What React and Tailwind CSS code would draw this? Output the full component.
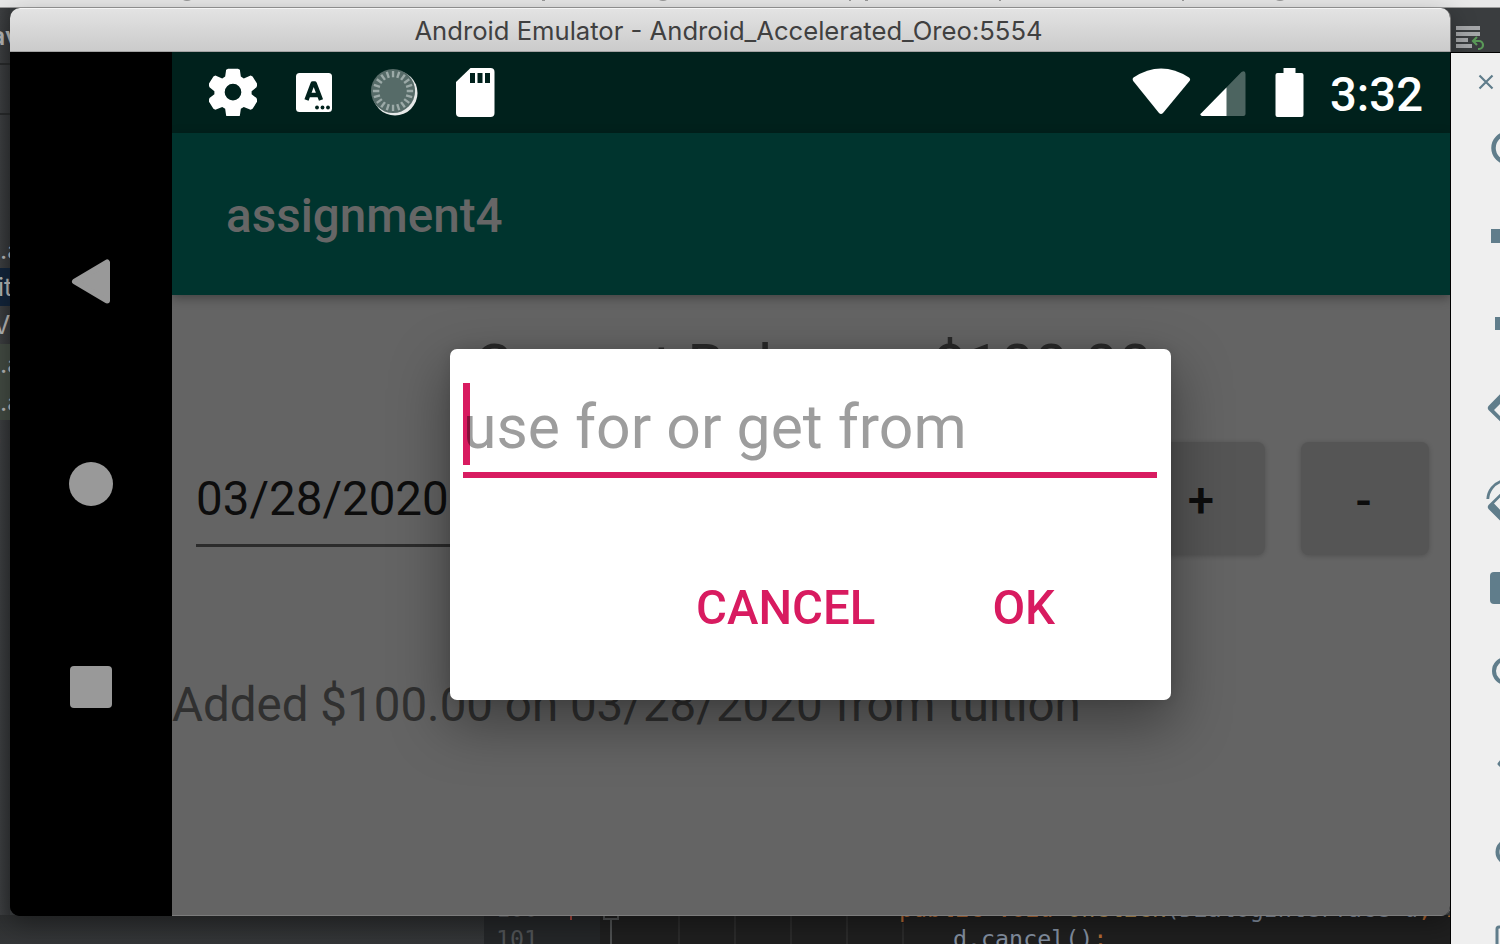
import React from "react";

function Desktop() {
  return (
    <div className="absolute inset-0 flex flex-col bg-[#343638]">
      <div className="h-2 shrink-0 border-b border-[#9b9b9b] bg-[#e8e8e8]">
        <svg className="h-[7px] w-[1500px]" viewBox="0 0 1500 7" fill="#999">
          <path d="M183 0h8q-4 2-8 0zM542 0h3v1h-3zM659 0h8q-4 2-8 0zM849 0h2v1h-2zM865 0h3v1h-3zM999 0h2v1h-2zM1182 0h2v1h-2zM1276 0h8q-4 2-8 0z" />
        </svg>
      </div>
      <div className="flex h-[907px] shrink-0">
        <div className="flex w-[10px] shrink-0 flex-col overflow-hidden whitespace-nowrap bg-linear-to-r from-[#3c3e40] to-[#333537] font-['Inter',sans-serif] text-[25px] leading-[34px] text-[#b4b4b4]">
          <div className="h-[57px] border-b-2 border-[#27292a] pt-[11px]"><div className="-ml-[9px] font-semibold">av</div></div>
          <div className="h-[50px] border-b-2 border-[#27292a]" />
          <div className="h-[115px]" />
          <div className="h-[38px] pt-[3px]">.a</div>
          <div className="h-[38px] bg-[#12243a] pt-0.5"><div className="-ml-0.5">it</div></div>
          <div className="h-[38px] pt-0.5"><div className="-ml-[7px]">V</div></div>
          <div className="h-[38px] bg-[#424a42] pt-[3px]">.a</div>
          <div className="h-[38px] bg-[#424a42] pt-[3px]">.a</div>
          <div className="h-[38px] pt-0.5"><div className="-ml-[7px]">)</div></div>
        </div>
        <div className="flex flex-1 justify-end bg-[#3a3d3f]">
          <svg className="mt-[18px] mr-[15px] h-[26px] w-[30px]" viewBox="0 0 30 26" fill="none">
            <path d="M1 2h24M1 8h24M1 14h12M1 20h16" stroke="#a5a7a9" strokeWidth="4" />
            <path d="M19 15h5a4 4 0 0 1 0 8h-1M22 11l-4 4 4 4" stroke="#5a9a58" strokeWidth="2.2" />
          </svg>
        </div>
      </div>
      <div className="flex h-[29px] overflow-hidden font-['DejaVu_Sans_Mono',monospace] text-[23.3px] leading-[30px]">
        <div className="w-[484px] shrink-0 bg-linear-to-b from-[#2d2f30] to-[#343638]" />
        <div className="relative w-[116px] shrink-0 overflow-hidden bg-[#242628] pl-3 text-[#505356]">
          <div className="-mt-[21px]">100</div>
          <div>101</div>
          <div className="absolute left-[86px] top-0 h-[5px] w-0.5 bg-[#a5453c]" />
        </div>
        <div className="relative flex-1 overflow-hidden whitespace-pre bg-[#1f1f1f] text-[#838fa0]">
          <svg className="absolute left-0 top-0 h-[29px] w-[320px]" viewBox="0 0 320 29" fill="none">
            <path d="M79 0v29M135 0v29M191 0v29M247 0v29M303 8v21" stroke="#2b2b2b" strokeWidth="2" />
            <path d="M4 0v4h14V0M11 5v24" stroke="#4e5051" strokeWidth="2" />
          </svg>
          <div className="-mt-[21px] pl-[299px]"><span className="text-[#b36a34]">public void </span><span className="text-[#b8904f]">onClick</span>(DialogInterface d<span className="text-[#b36a34]">, int</span></div>
          <div className="pl-[353px]">d.cancel()<span className="text-[#b36a34]">;</span></div>
        </div>
      </div>
    </div>
  );
}

function StatusBar() {
  const ticks = Array.from({ length: 20 }, (_, i) => i * 18);
  return (
    <div className="flex h-[81px] shrink-0 items-start bg-[#00211c]">
      <svg className="mt-4 ml-[37px] h-12 w-12" viewBox="0.5 0.3 49 49" fill="white" fillRule="evenodd">
        <path d="M20 1h10l2 1 1 7 3 2 7-3 2 1 5 8-1 3-5 4v3l5 4 1 3-5 8-2 1-7-3-3 2-1 7-2 1H20l-2-1-1-7-3-2-7 3-2-1-5-8 1-3 5-4v-3l-5-4-1-3 5-8 2-1 7 3 3-2 1-7zM25 16.500a8.500 8.500 0 1 0 0 17a8.500 8.500 0 1 0 0-17z" />
      </svg>
      <svg className="mt-[21px] ml-[38px] h-10 w-[37px]" viewBox="0 0 37 40">
        <rect x="1" y="0" width="36" height="39" rx="3.500" fill="white" />
        <path d="M11.500 27L17.700 10.500h2L26 27M14 22h9.500" fill="none" stroke="#00211c" strokeWidth="4.400" strokeLinejoin="round" />
        <g fill="#00211c"><circle cx="22" cy="34.500" r="1.900" /><circle cx="27.500" cy="34.500" r="1.900" /><circle cx="33" cy="34.500" r="1.900" /></g>
      </svg>
      <svg className="mt-4 ml-[38px] h-[49px] w-[49px]" viewBox="0 0 50 50">
        <circle cx="25.500" cy="25.500" r="23" fill="#fff" opacity=".9" />
        <circle cx="23.500" cy="23.500" r="22.500" fill="#566b68" />
        {ticks.map((a) => (
          <path key={a} d="M23.500 3v6.500" stroke="#9caaa8" strokeWidth="2.400" transform={`rotate(${a} 23.5 23.5)`} />
        ))}
      </svg>
      <svg className="mt-4 ml-[36px] h-[49px] w-10" viewBox="0 0 40 49">
        <path d="M15.500 0H35.500a4 4 0 0 1 4 4V45a4 4 0 0 1-4 4H5a4 4 0 0 1-4-4V14z" fill="white" />
        <path d="M15 5h5v10h-5zM22.500 5h5v10h-5zM30 5h5v10h-5z" fill="#00211c" />
      </svg>
      <svg className="mt-[15px] ml-auto h-12 w-[60px]" viewBox="0 0 60 48">
        <path d="M2.500 10.500Q30-7.500 58 10.500Q60 12 58.500 14L32 46Q30 48 28 46L2.200 14Q1 12 2.500 10.500z" fill="white" />
      </svg>
      <svg className="mt-[18px] ml-[9px] h-[47px] w-[46px]" viewBox="0 0 46 47">
        <path d="M1.500 43L41.500 2Q45.500 0 45.500 4V44Q45.500 46 43.500 46H2Q-1 45 1.500 43z" fill="#4c6460" />
        <path d="M1.500 43L26.500 17.500V46H2Q-1 45 1.500 43z" fill="white" />
      </svg>
      <svg className="mt-[15px] ml-[29px] h-[51px] w-[30px]" viewBox="0 0 30 51">
        <path d="M8.500 1H20.500V6H26.500a2 2 0 0 1 2 2V48a2 2 0 0 1-2 2H2.500a2 2 0 0 1-2-2V8a2 2 0 0 1 2-2H8.500z" fill="white" />
      </svg>
      <div className="mt-[19px] ml-[25px] w-[120px] whitespace-nowrap text-[47.250px] leading-[48px] font-medium text-white">3:32</div>
    </div>
  );
}

function Dialog() {
  return (
    <div className="absolute left-[440px] top-[341px] z-20 flex h-[351px] w-[721px] flex-col rounded-[7px] bg-white pr-[14px] pl-[13px] pt-[34px] shadow-[0_22px_55px_4px_rgba(0,0,0,0.36),0_0_16px_rgba(0,0,0,0.12)]">
      <div className="relative h-[89px] whitespace-nowrap text-[60.700px] leading-[89px] text-[#9d9d9d]">
        use for or get from
        <div className="absolute left-0 top-0 h-[82px] w-[7px] bg-[#d81b60] mix-blend-multiply" />
      </div>
      <div className="h-1.5 bg-[#d81b60]" />
      <div className="mt-[92px] flex justify-end gap-[117px] pr-[102px] text-[47.400px] leading-[76px] font-medium text-[#d81b60]">
        <button>CANCEL</button>
        <button>OK</button>
      </div>
    </div>
  );
}

function Emulator() {
  return (
    <div className="absolute left-[10px] top-2 flex h-[908px] w-[1441px] flex-col overflow-hidden rounded-t-[10px] rounded-b-[10px] border-r border-[#777] bg-black shadow-[0_8px_26px_rgba(0,0,0,0.35)]">
      <div className="flex h-11 shrink-0 items-center justify-center border-b border-t border-t-[#f5f5f5] border-b-[#a3a3a3] bg-linear-to-b from-[#e3e3e3] to-[#cbcbcb] pt-0.5 pr-[3px] font-['Inter',sans-serif] text-[25.640px] text-[#404040]">
        <span className="whitespace-nowrap">Android Emulator - Android_Accelerated_Oreo:5554</span>
      </div>
      <div className="flex flex-1">
        <div className="flex w-[162px] shrink-0 flex-col items-center bg-black">
          <svg className="mt-[207px] ml-0.5 h-[46px] w-[42px]" viewBox="0 0.5 42 46">
            <path d="M4 23L36 4V42z" fill="#999" stroke="#999" strokeWidth="6" strokeLinejoin="round" />
          </svg>
          <div className="mt-[157px] h-[44px] w-[44px] rounded-full bg-[#999]" />
          <div className="mt-[160px] h-[42px] w-[42px] rounded-[4px] bg-[#999]" />
        </div>
        <div className="flex flex-1 flex-col overflow-hidden border-b border-[#7c7c7c] bg-[#646464]">
          <StatusBar />
          <div className="z-10 flex h-[162px] shrink-0 items-center bg-[#00342e] pt-1.5 pl-[54px] text-[47.600px] font-medium text-[#666] shadow-[0_3px_10px_rgba(0,0,0,0.35)]">
            <span>assignment4</span>
          </div>
          <div className="mt-[25px] h-[96px] pl-1 text-center text-[60.500px] leading-[96px] whitespace-nowrap text-[#292929]">Current Balance: $100.00</div>
          <div className="mt-[26px] flex h-[114px] items-start pl-6">
            <div className="h-[105px] w-[400px] border-b-[3px] border-[#2b2b2b] text-[47.500px] leading-[115px] text-[#0d0d0d]">03/28/2020</div>
            <div className="ml-[541px] flex h-[113px] w-[128px] items-center justify-center rounded-[8px] bg-[#555] pt-[7px] text-[47.500px] font-medium text-[#0c0c0c] shadow-[0_1px_5px_rgba(0,0,0,0.2)]">+</div>
            <div className="ml-9 flex h-[113px] w-[128px] shrink-0 items-center justify-center rounded-[8px] bg-[#555] pt-[7px] pr-[3px] text-[47.500px] font-medium text-[#0c0c0c] shadow-[0_1px_5px_rgba(0,0,0,0.2)]">-</div>
          </div>
          <div className="mt-[117px] text-[47.500px] leading-[64px] whitespace-nowrap text-[#303030]">Added $100.00 on 03/28/2020 from tuition</div>
        </div>
      </div>
      <Dialog />
    </div>
  );
}

function Toolbar() {
  return (
    <div className="absolute left-[1450px] top-[52px] h-[892px] w-[50px] overflow-hidden border-l border-t border-black bg-[#efefef]">
      <svg className="h-[891px] w-[49px]" viewBox="1451 53 49 891" fill="none" stroke="#607d8b">
        <path d="M1479.500 75.500l13 13M1492.500 75.500l-13 13" strokeWidth="2.200" />
        <circle cx="1508" cy="148" r="14.500" strokeWidth="4.500" />
        <path d="M1491 229h9v14h-9zM1495 317h5v13h-5z" fill="#607d8b" stroke="none" />
        <path d="M1504 390L1488.500 406Q1487 408 1488.500 410L1504 425V420L1494 410L1504 400z" fill="#607d8b" stroke="none" />
        <path d="M1487.800 499a20 20 0 0 1 14-18" strokeWidth="2.800" />
        <path d="M1504 490L1488.500 505Q1487 507 1488.500 509L1504 524.500V514L1494 503.500L1504 493.500z" fill="#607d8b" stroke="none" />
        <rect x="1490" y="572" width="20" height="32" rx="4" fill="#607d8b" stroke="none" />
        <circle cx="1506" cy="671" r="12" strokeWidth="4" />
        <path d="M1503 759l-4 5 4 4" strokeWidth="3" strokeLinejoin="round" />
        <circle cx="1509" cy="852" r="11.500" strokeWidth="4" />
        <rect x="1497" y="927" width="15" height="24" rx="2" strokeWidth="3" />
      </svg>
    </div>
  );
}

export default function App() {
  return (
    <div className="relative h-[944px] w-[1500px] overflow-hidden font-['Roboto',sans-serif]">
      <Desktop />
      <Emulator />
      <Toolbar />
    </div>
  );
}
